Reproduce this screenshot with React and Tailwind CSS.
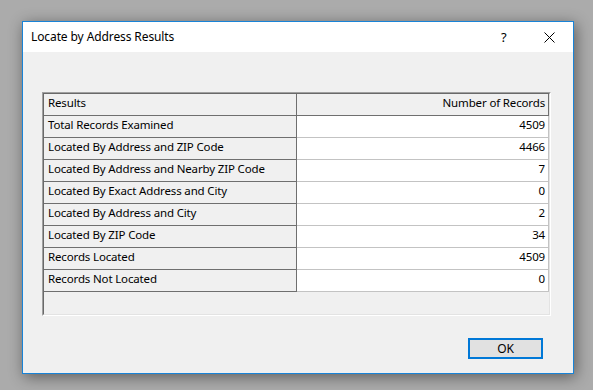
export default function App() {
  const rows = [
    ["Total Records Examined", "4509"],
    ["Located By Address and ZIP Code", "4466"],
    ["Located By Address and Nearby ZIP Code", "7"],
    ["Located By Exact Address and City", "0"],
    ["Located By Address and City", "2"],
    ["Located By ZIP Code", "34"],
    ["Records Located", "4509"],
    ["Records Not Located", "0"],
  ];
  const font = { fontFamily: '"Noto Sans", "Open Sans", sans-serif' };
  return (
    <div className="w-[593px] h-[390px] bg-[#ababab] pl-[22px] pt-[21px] overflow-hidden" style={font}>
      <div className="w-[552px] h-[353px] border border-[#1883d7] bg-[#f0f0f0] flex flex-col shadow-[2px_3px_14px_rgba(0,0,0,0.45)] text-[11.5px] tracking-[-0.15px] text-black">
        <div className="h-[30px] bg-white flex items-center pl-[8px] shrink-0">
          <span className="flex-1 leading-none text-[12px] tracking-[-0.1px]">Locate by Address Results</span>
          <span className="w-[12px] text-[13px] leading-none mr-[31px]">?</span>
          <svg width="11" height="11" viewBox="0 0 11 11" className="mr-[18px]">
            <path d="M0.5 0.5 L10.5 10.5 M10.5 0.5 L0.5 10.5" stroke="#000" strokeWidth="1" />
          </svg>
        </div>
        <div className="flex-1 flex flex-col pl-[19px] pt-[40px]">
          <div className="w-[509px] h-[224px] border border-t-[#a0a0a0] border-l-[#a0a0a0] border-r-white border-b-white">
            <div className="w-full h-full border border-t-[#696969] border-l-[#696969] border-r-[#e3e3e3] border-b-[#e3e3e3] bg-[#f0f0f0] flex flex-col">
              <div className="flex h-[22px]">
                <div className="w-[253px] h-full border-r border-b border-[#6f6f6f] flex items-center pl-[4px] pb-[3px]">Results</div>
                <div className="w-[252px] h-full border-r border-b border-[#6f6f6f] flex items-center justify-end pr-[3px] pb-[3px]">Number of Records</div>
              </div>
              {rows.map(([label, value]) => (
                <div key={label} className="flex h-[22px]">
                  <div className="w-[253px] h-full border-r border-b border-[#6f6f6f] flex items-center pl-[4px] pb-[3px]">{label}</div>
                  <div className="w-[252px] h-full bg-white border-r border-b border-[#c3c3c3] flex items-center justify-end pr-[3px] pb-[3px]">{value}</div>
                </div>
              ))}
            </div>
          </div>
          <div className="flex justify-end pr-[30px] mt-[22px]">
            <div className="w-[75px] h-[21px] border-2 border-[#0078d7] bg-[#e1e1e1] flex items-center justify-center leading-none text-[12px]">OK</div>
          </div>
        </div>
      </div>
    </div>
  );
}
